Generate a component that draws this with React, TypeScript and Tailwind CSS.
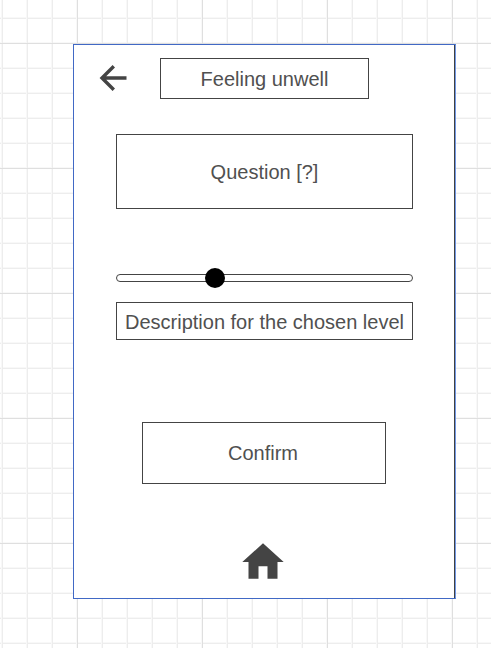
import type { ReactNode } from "react";

function Box({ className, children }: { className: string; children: ReactNode }) {
  return (
    <div className={`flex items-center justify-center border border-[#444] whitespace-nowrap ${className}`}>
      {children}
    </div>
  );
}

function CanvasGrid({ children }: { children: ReactNode }) {
  return (
    <div className="h-[648px] w-[491px] overflow-hidden bg-white bg-[linear-gradient(to_right,#dfdfdf_1px,transparent_1px),linear-gradient(to_bottom,#dfdfdf_1px,transparent_1px),linear-gradient(to_right,#f8f8f8_1px,#ededed_1px,#ededed_2px,transparent_2px),linear-gradient(to_bottom,#f8f8f8_1px,#ededed_1px,#ededed_2px,transparent_2px)] bg-[size:125px_125px,125px_125px,25px_25px,25px_25px] bg-[position:77px_0px,0px_43px,1px_0px,0px_17px] pt-[44px] pl-[73px]">
      {children}
    </div>
  );
}

export default function App() {
  return (
    <CanvasGrid>
      <main className="flex h-[555px] w-[383px] flex-col border border-[#4169c5] border-r-[#7198e5] bg-white font-['Liberation_Sans',Arial,sans-serif] text-[20px] leading-[24px] text-[#505050]">
        <div className="flex h-full flex-col border-r border-[#3f4043] pt-[13px]">
          <header className="flex h-[41px] items-start">
            <button aria-label="Back" className="mt-[6px] ml-[25px] h-[28px] w-[29px]">
              <svg width="29" height="28" viewBox="0 0 29 28" fill="none" stroke="#444" strokeWidth="3.4">
                <path d="M27.5 14H3.5M14.8 2.2L3 14L14.8 25.8" />
              </svg>
            </button>
            <Box className="ml-[32px] h-[41px] w-[209px]">Feeling unwell</Box>
          </header>
          <Box className="mt-[35px] ml-[42px] h-[75px] w-[297px]">Question [?]</Box>
          <div className="mt-[59px] ml-[42px] flex h-[20px] w-[297px] items-center">
            <div className="flex h-[8px] w-[297px] items-center rounded-full border border-[#444]">
              <div className="ml-[88px] size-[20px] shrink-0 rounded-full bg-black" />
            </div>
          </div>
          <Box className="mt-[14px] ml-[42px] h-[38px] w-[297px] pt-[2px]">Description for the chosen level</Box>
          <Box className="mt-[82px] ml-[68px] h-[62px] w-[244px] pr-[2px]">Confirm</Box>
          <nav className="mt-[59px] ml-[168px]">
            <svg width="42" height="37" viewBox="0 0 42 37" fill="#444" aria-label="Home">
              <path d="M21 .3L.3 19H6.5V35.7H16.5V23.2H25.5V35.7H35.5V19H41.7Z" />
            </svg>
          </nav>
        </div>
      </main>
    </CanvasGrid>
  );
}
